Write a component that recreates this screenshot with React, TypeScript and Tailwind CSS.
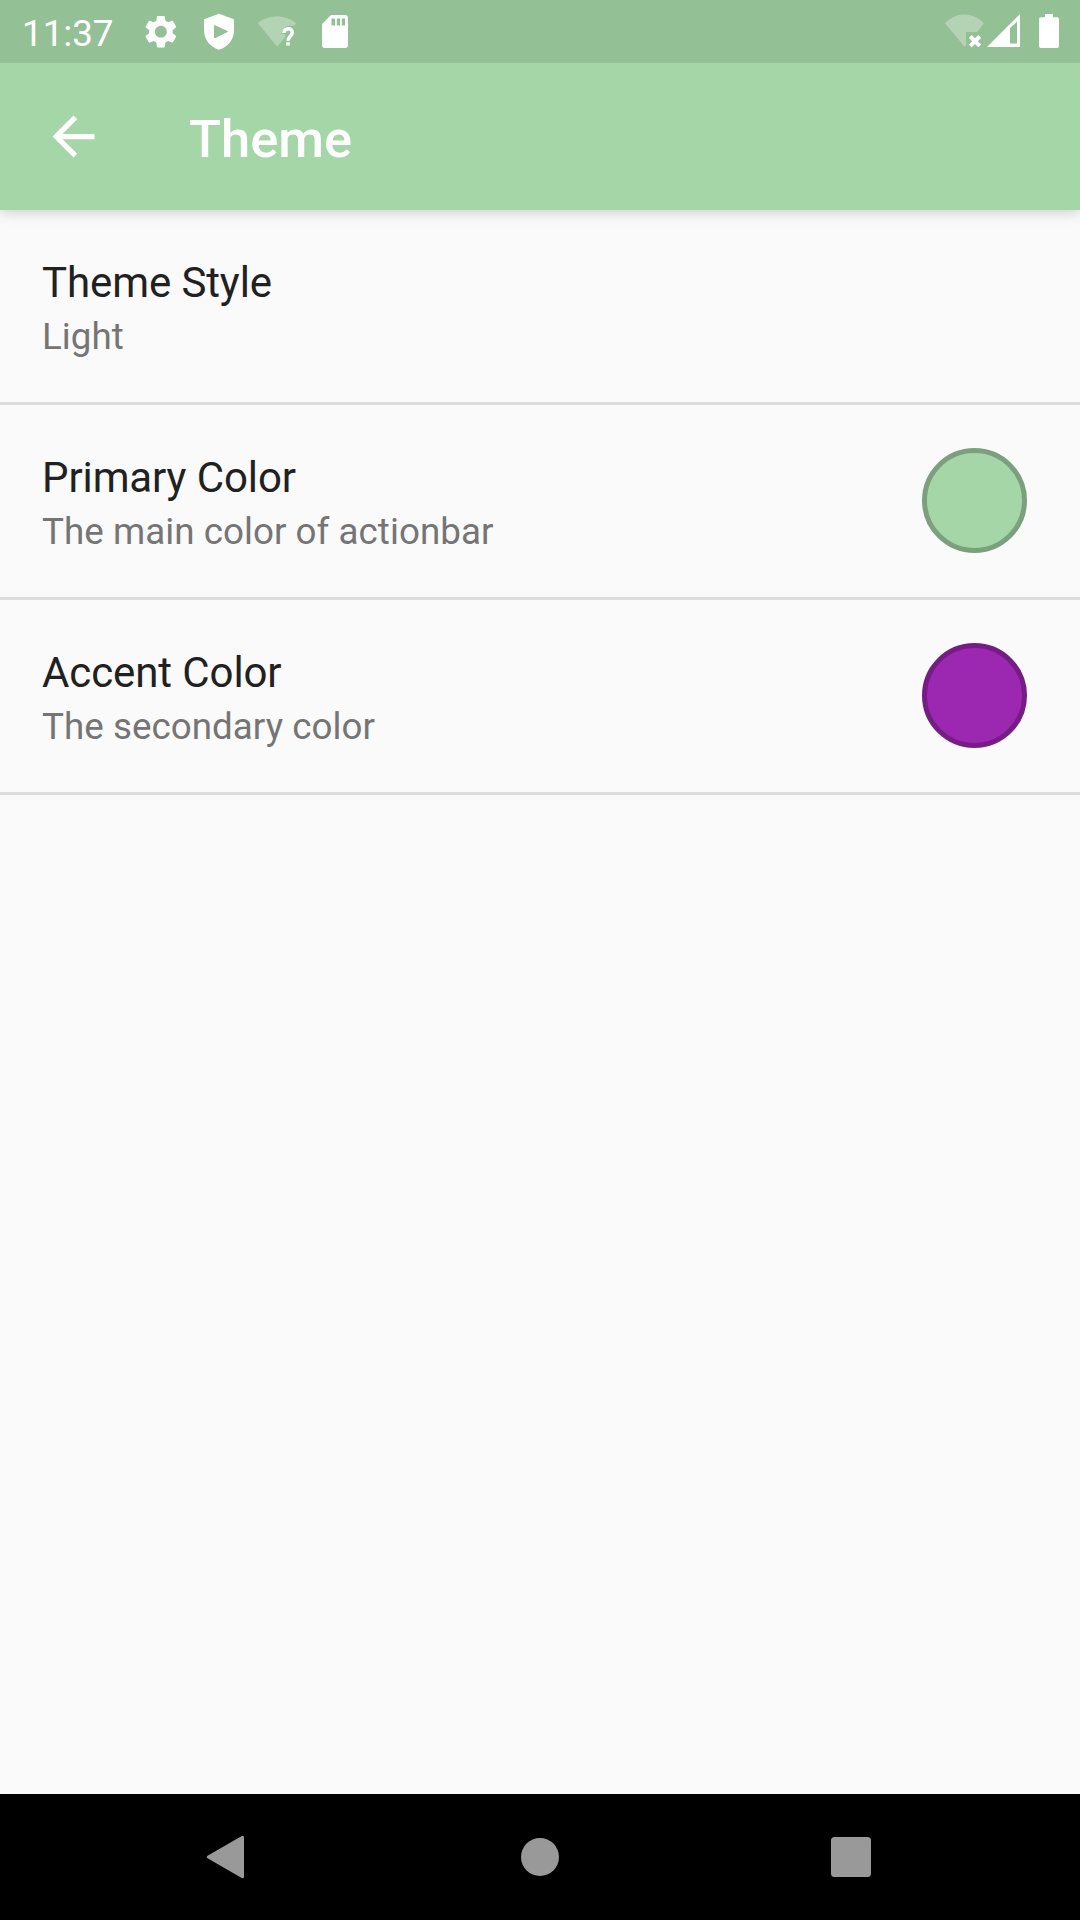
import React from "react";

type Row = { title: string; summary: string; swatch?: string };

const rows: Row[] = [
  { title: "Theme Style", summary: "Light" },
  { title: "Primary Color", summary: "The main color of actionbar", swatch: "bg-[#a5d6a7] border-[#7ca07d]" },
  { title: "Accent Color", summary: "The secondary color", swatch: "bg-[#9c27b0] border-[#751d84]" },
];

function StatusBar() {
  return (
    <div className="relative z-10 flex h-[63px] items-center bg-[#94c096] text-white">
      <span className="ml-[22px] w-[92px] pt-1 text-[36.75px] leading-[43px]">11:37</span>
      <svg className="ml-[26px]" width="42" height="63" viewBox="0 0 42 63" fill="currentColor">
        <g transform="translate(1.2 12) scale(1.64)">
          <path d="M19.14 12.94c.04-.3.06-.61.06-.94 0-.32-.02-.64-.07-.94l2.03-1.58c.18-.14.23-.41.12-.61l-1.92-3.32c-.12-.22-.37-.29-.59-.22l-2.39.96c-.5-.38-1.03-.7-1.62-.94l-.36-2.54c-.04-.24-.24-.41-.48-.41h-3.84c-.24 0-.43.17-.47.41l-.36 2.54c-.59.24-1.13.57-1.62.94l-2.39-.96c-.22-.08-.47 0-.59.22L2.74 8.87c-.12.21-.08.47.12.61l2.03 1.58c-.05.3-.09.63-.09.94s.02.64.07.94l-2.03 1.58c-.18.14-.23.41-.12.61l1.92 3.32c.12.22.37.29.59.22l2.39-.96c.5.38 1.03.7 1.62.94l.36 2.54c.05.24.24.41.48.41h3.84c.24 0 .44-.17.47-.41l.36-2.54c.59-.24 1.13-.56 1.62-.94l2.39.96c.22.08.47 0 .59-.22l1.92-3.32c.12-.22.07-.47-.12-.61l-2.01-1.58zM12 15.6c-1.98 0-3.6-1.62-3.6-3.6s1.62-3.6 3.6-3.6 3.6 1.62 3.6 3.6-1.62 3.6-3.6 3.6z" />
        </g>
      </svg>
      <svg className="ml-[22px]" width="30" height="63" viewBox="204 0 30 63">
        <path d="M219 13.8 L234 19.3 V30 C234 39.5 228 47 219 49.8 C210 47 204 39.5 204 30 V19.3 Z" fill="currentColor" />
        <path d="M214.5 25.5 L227.5 31.5 L214.5 38 Z" fill="#94c096" stroke="#94c096" strokeLinejoin="round" />
      </svg>
      <svg className="ml-[22px]" width="42" height="63" viewBox="256 0 42 63" fill="none">
        <path d="M258 23.2 C268 14.3 286 14.3 296 23.2 L294 26 C289 24 281.5 27 281.5 34 H285 L285 37.5 L277 46.5 Z" fill="white" fillOpacity=".3" />
        <path d="M283.9 33 C283.9 27.3 292.3 27.3 292.3 32.6 C292.3 36.2 288 36.5 288 40.8" stroke="white" strokeWidth="3.5" />
        <rect x="286.2" y="42.2" width="3.6" height="3.3" fill="white" />
      </svg>
      <svg className="ml-[24px]" width="26" height="63" viewBox="322 0 26 63">
        <path fill="white" fillRule="evenodd" d="M331 15 H345 Q348 15 348 18 V45 Q348 48 345 48 H325 Q322 48 322 45 V24 Z M331.5 18.5 V25.5 H335 V18.5 Z M336.8 18.5 V25.5 H340 V18.5 Z M341.8 18.5 V25.5 H345 V18.5 Z" />
      </svg>
      <svg className="ml-auto mr-[19px]" width="118" height="63" viewBox="943 0 118 63">
        <path d="M945 23.2 C956 11.6 973 11.6 984 23.2 L977 32 H966 V45 L964.5 46.5 Z" fill="white" fillOpacity=".3" />
        <path d="M970.3 36.5 L979.7 45.8 M979.7 36.5 L970.3 45.8" stroke="white" strokeWidth="4" />
        <path fill="white" fillRule="evenodd" d="M987 47 L1020 14 V47 Z M1010 28 V43.5 H1017 V21.8 Z" />
        <path fill="white" d="M1045 14 H1053 V17.3 H1057 Q1059 17.3 1059 19.3 V46 Q1059 48 1057 48 H1041 Q1039 48 1039 46 V19.3 Q1039 17.3 1041 17.3 H1045 Z" />
      </svg>
    </div>
  );
}

function AppBar() {
  return (
    <header className="relative flex h-[147px] items-center bg-[#a5d6a7] text-white shadow-[0_3px_12px_rgba(0,0,0,0.17)]">
      <svg className="ml-[42px]" width="63" height="63" viewBox="0 0 24 24" fill="currentColor">
        <path d="M20 11H7.83l5.59-5.59L12 4l-8 8 8 8 1.41-1.41L7.83 13H20v-2z" />
      </svg>
      <h1 className="ml-[84px] pt-[5px] text-[52.5px] font-medium leading-[62px]">Theme</h1>
    </header>
  );
}

function PreferenceRow({ title, summary, swatch }: Row) {
  return (
    <li className="flex h-[195px] items-center justify-between border-b-[3px] border-[#dcdcdc] pl-[42px] pr-[53px]">
      <div className="pt-[4px]">
        <div className="text-[42px] leading-[50px] tracking-[-0.1px] text-[#212121]">{title}</div>
        <div className="mt-[7px] text-[36.75px] leading-[44px] tracking-[0.04px] text-[#757575]">{summary}</div>
      </div>
      {swatch && <div className={"mb-px size-[105px] rounded-full border-[5px] " + swatch} />}
    </li>
  );
}

function NavigationBar() {
  return (
    <nav className="flex h-[126px] items-center justify-between bg-black px-[190px] pt-[6px]">
      <svg width="80" height="80" viewBox="190 1820 80 80">
        <path d="M208.3 1857 L242.5 1837.3 V1876.7 Z" fill="#999" stroke="#999" strokeWidth="3" strokeLinejoin="round" />
      </svg>
      <svg width="80" height="80" viewBox="500 1820 80 80"><circle cx="540" cy="1857" r="19" fill="#999" /></svg>
      <svg width="80" height="80" viewBox="810 1820 80 80"><rect x="831" y="1837" width="40" height="40" rx="3.5" fill="#999" /></svg>
    </nav>
  );
}

export default function App() {
  return (
    <div className="flex h-[1920px] w-[1080px] flex-col overflow-hidden bg-[#fafafa] font-[Roboto,sans-serif]">
      <StatusBar />
      <AppBar />
      <ul className="flex-1">
        {rows.map((row) => (
          <PreferenceRow key={row.title} {...row} />
        ))}
      </ul>
      <NavigationBar />
    </div>
  );
}
